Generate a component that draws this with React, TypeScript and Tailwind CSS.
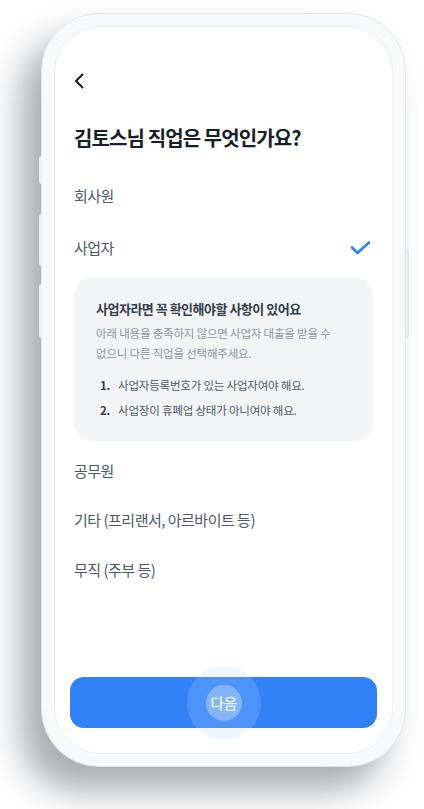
const font = { fontFamily: '"Noto Sans CJK KR", "Noto Sans", sans-serif' };

const options = ["공무원", "기타 (프리랜서, 아르바이트 등)", "무직 (주부 등)"];

function ChevronLeft() {
  return (
    <svg width="10" height="16" viewBox="0 0 10 16" fill="none">
      <path d="M8.5 1.5L2 8l6.5 6.5" stroke="#191f28" strokeWidth="2" strokeLinecap="round" strokeLinejoin="round" />
    </svg>
  );
}

function Check() {
  return (
    <svg width="21" height="14" viewBox="0 0 21 14" fill="none">
      <path d="M2 6.5l5.5 5.5L19 1.5" stroke="#3182f6" strokeWidth="2.6" strokeLinecap="round" strokeLinejoin="round" />
    </svg>
  );
}

export default function App() {
  return (
    <div className="min-h-[809px] w-[424px] bg-white overflow-hidden pt-[13px] pl-[41px]" style={font}>
      {/* phone body */}
      <div className="relative w-[365px] h-[754px] rounded-[58px] bg-[#f8f9fb] border border-[#e3e6ec] p-[12px] shadow-[-20px_24px_34px_rgba(40,48,66,0.4)]">
        {/* side buttons */}
        <div className="absolute -left-[3px] top-[142px] w-[3px] h-[28px] rounded-l bg-[#eef0f4]" />
        <div className="absolute -left-[3px] top-[200px] w-[3px] h-[52px] rounded-l bg-[#eef0f4]" />
        <div className="absolute -left-[3px] top-[270px] w-[3px] h-[54px] rounded-l bg-[#eef0f4]" />
        <div className="absolute -right-[4px] top-[235px] w-[4px] h-[89px] rounded-r bg-[#eceef3] border border-[#e1e4ea]" />

        {/* screen */}
        <div className="h-full rounded-[46px] bg-white border border-[#eceef2] flex flex-col px-[19px]">
          <div className="pt-[43px] h-[65px] flex items-end">
            <div className="h-[22px] flex items-center">
              <ChevronLeft />
            </div>
          </div>

          <h1 className="mt-[32px] text-[20px] leading-[28px] font-bold text-[#191f28] tracking-[-0.9px]">
            김토스님 직업은 무엇인가요?
          </h1>

          <div className="mt-[18px] h-[52px] flex items-center text-[15px] text-[#4e5968] tracking-[-0.5px]">회사원</div>
          <div className="h-[52px] flex items-center justify-between text-[15px] text-[#4e5968] tracking-[-0.5px]">
            <span>사업자</span>
            <span className="mr-[2px]">
              <Check />
            </span>
          </div>

          <div className="mt-[4px] rounded-[18px] bg-[#f2f4f6] pl-[22px] pr-[14px] pt-[21px] pb-[21px]">
            <p className="text-[13px] leading-[20px] font-bold text-[#333d4b] tracking-[-0.5px]">
              사업자라면 꼭 확인해야할 사항이 있어요
            </p>
            <p className="mt-[4px] text-[11.5px] leading-[20px] text-[#8b95a1] tracking-[-0.2px]">
              아래 내용을 충족하지 않으면 사업자 대출을 받을 수
              <br />
              없으니 다른 직업을 선택해주세요.
            </p>
            <ol className="mt-[12px] flex flex-col gap-[5px] text-[11.5px] leading-[20px] text-[#4e5968] tracking-[-0.2px]">
              <li className="flex">
                <span className="w-[22px] pl-[4px] font-bold text-[#333d4b]">1.</span>
                <span>사업자등록번호가 있는 사업자여야 해요.</span>
              </li>
              <li className="flex">
                <span className="w-[22px] pl-[4px] font-bold text-[#333d4b]">2.</span>
                <span>사업장이 휴폐업 상태가 아니여야 해요.</span>
              </li>
            </ol>
          </div>

          <div className="mt-[5px]">
            {options.map((o) => (
              <div key={o} className="h-[49.5px] flex items-center text-[15px] text-[#4e5968] tracking-[-0.5px]">
                {o}
              </div>
            ))}
          </div>

          <div className="flex-1" />

          <div className="-mx-[4px] mb-[25px]">
            <button className="relative w-full h-[51px] rounded-[14px] bg-[#3182f6]">
              <span className="absolute left-1/2 top-1/2 -translate-x-1/2 -translate-y-1/2 w-[74px] h-[74px] rounded-full bg-[rgba(180,215,255,0.22)]" />
              <span className="absolute left-1/2 top-1/2 -translate-x-1/2 -translate-y-1/2 w-[36px] h-[36px] rounded-full bg-white/30" />
              <span className="relative text-[15px] font-medium text-white/85 tracking-[-0.5px]">다음</span>
            </button>
          </div>
        </div>
      </div>
    </div>
  );
}
